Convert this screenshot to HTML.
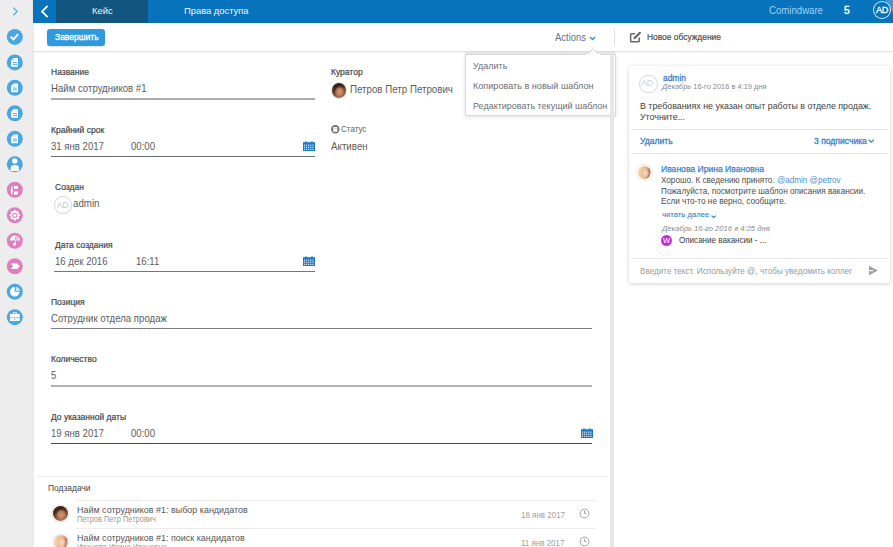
<!DOCTYPE html>
<html><head><meta charset="utf-8"><style>
html,body{margin:0;padding:0;width:893px;height:547px;overflow:hidden;background:#fff;}
body{position:relative;font-family:"Liberation Sans",sans-serif;}
.t{position:absolute;white-space:nowrap;line-height:1;z-index:3;transform-origin:0 0;}
.r{position:absolute;}
</style></head><body>
<div class="r" style="left:0px;top:0px;width:33px;height:547px;background:#ededed;box-shadow:1px 0 2px rgba(0,0,0,0.07);z-index:1"></div>
<div class="r" style="left:31.5px;top:0px;width:1.5px;height:547px;background:#e6e6e6;z-index:1"></div>
<svg class="r" style="left:0;top:0;z-index:3" width="33" height="547" viewBox="0 0 33 547"><path d="M13.3 7.6 L17.2 11.5 L13.3 15.4" fill="none" stroke="#4aa6e2" stroke-width="1.1"/></svg>
<svg class="r" style="left:0;top:0;z-index:3" width="33" height="547" viewBox="0 0 33 547"><circle cx="14.8" cy="36.90" r="8" fill="#4aa6e2"/><g transform="translate(14.8,36.90)" fill="#fff" stroke="none"><path d="M-4.2 -0.2 L-1.4 2.5 L3.3 -2.8" fill="none" stroke="#fff" stroke-width="1.9"/></g><circle cx="14.8" cy="62.38" r="8" fill="#4aa6e2"/><g transform="translate(14.8,62.38)" fill="#fff" stroke="none"><path d="M-1.2 -4.4 L3.2 -4.4 L3.2 4.4 L-3.75 4.4 L-3.75 -1.8 Z" fill="#fff"/><path d="M-1.2 -4.4 L-1.2 -1.8 L-3.75 -1.8" fill="none" stroke="#4aa6e2" stroke-width="0.5" opacity="0.5"/><rect x="-1.9" y="-0.25" width="4" height="0.9" fill="#4aa6e2"/><rect x="-1.9" y="1.55" width="4" height="0.9" fill="#4aa6e2"/><rect x="-0.3" y="-3.2" width="2.4" height="0.7" fill="#4aa6e2" opacity="0.35"/></g><circle cx="14.8" cy="87.86" r="8" fill="#4aa6e2"/><g transform="translate(14.8,87.86)" fill="#fff" stroke="none"><path d="M-1.2 -4.4 L3.2 -4.4 L3.2 4.4 L-3.75 4.4 L-3.75 -1.8 Z" fill="#fff"/><path d="M-1.2 -4.4 L-1.2 -1.8 L-3.75 -1.8" fill="none" stroke="#4aa6e2" stroke-width="0.5" opacity="0.5"/><rect x="-1.9" y="-0.25" width="4" height="0.9" fill="#4aa6e2"/><rect x="-1.9" y="1.55" width="4" height="0.9" fill="#4aa6e2"/><rect x="-0.3" y="-3.2" width="2.4" height="0.7" fill="#4aa6e2" opacity="0.35"/></g><circle cx="14.8" cy="113.34" r="8" fill="#4aa6e2"/><g transform="translate(14.8,113.34)" fill="#fff" stroke="none"><path d="M-1.2 -4.4 L3.2 -4.4 L3.2 4.4 L-3.75 4.4 L-3.75 -1.8 Z" fill="#fff"/><path d="M-1.2 -4.4 L-1.2 -1.8 L-3.75 -1.8" fill="none" stroke="#4aa6e2" stroke-width="0.5" opacity="0.5"/><rect x="-1.9" y="-0.25" width="4" height="0.9" fill="#4aa6e2"/><rect x="-1.9" y="1.55" width="4" height="0.9" fill="#4aa6e2"/><rect x="-0.3" y="-3.2" width="2.4" height="0.7" fill="#4aa6e2" opacity="0.35"/></g><circle cx="14.8" cy="138.82" r="8" fill="#4aa6e2"/><g transform="translate(14.8,138.82)" fill="#fff" stroke="none"><path d="M-1.2 -4.4 L3.2 -4.4 L3.2 4.4 L-3.75 4.4 L-3.75 -1.8 Z" fill="#fff"/><path d="M-1.2 -4.4 L-1.2 -1.8 L-3.75 -1.8" fill="none" stroke="#4aa6e2" stroke-width="0.5" opacity="0.5"/><rect x="-1.9" y="-0.25" width="4" height="0.9" fill="#4aa6e2"/><rect x="-1.9" y="1.55" width="4" height="0.9" fill="#4aa6e2"/><rect x="-0.3" y="-3.2" width="2.4" height="0.7" fill="#4aa6e2" opacity="0.35"/></g><circle cx="14.8" cy="164.30" r="8" fill="#4aa6e2"/><g transform="translate(14.8,164.30)" fill="#fff" stroke="none"><circle cx="0" cy="-3.4" r="2.7"/><path d="M-4.2 6.6 L-4.2 3.6 Q-4.2 0.7 0 0.7 Q4.2 0.7 4.2 3.6 L4.2 6.6 Z"/></g><circle cx="14.8" cy="189.78" r="8" fill="#df7fbf"/><g transform="translate(14.8,189.78)" fill="#fff" stroke="none"><rect x="-0.8" y="-3.8" width="4" height="2.8"/><rect x="-0.8" y="1.7" width="4" height="3.1"/><path d="M-2.9 -3.6 L-2.9 4.6" stroke="#fff" stroke-width="1.3"/><path d="M-4.6 0.5 L-2.4 -1.2 L-2.4 2.2 Z"/></g><circle cx="14.8" cy="215.26" r="8" fill="#df7fbf"/><g transform="translate(14.8,215.26)" fill="#fff" stroke="none"><path d="M0.00 -5.70 L1.57 -3.79 L4.03 -4.03 L3.79 -1.57 L5.70 0.00 L3.79 1.57 L4.03 4.03 L1.57 3.79 L0.00 5.70 L-1.57 3.79 L-4.03 4.03 L-3.79 1.57 L-5.70 0.00 L-3.79 -1.57 L-4.03 -4.03 L-1.57 -3.79 Z"/><circle cx="0" cy="0" r="2.6" fill="#df7fbf"/><circle cx="0" cy="0" r="1.5" fill="#fff"/></g><circle cx="14.8" cy="240.74" r="8" fill="#df7fbf"/><g transform="translate(14.8,240.74)" fill="#fff" stroke="none"><path d="M-4.8 -0.2 A5 5 0 0 1 5.2 -0.2 Z"/><path d="M2.6 -5.4 L-0.3 3.6" stroke="#df7fbf" stroke-width="2.6"/><path d="M2.5 -5 L-0.3 3.6" stroke="#fff" stroke-width="0.9"/><circle cx="-0.3" cy="3.6" r="1.5"/></g><circle cx="14.8" cy="266.22" r="8" fill="#df7fbf"/><g transform="translate(14.8,266.22)" fill="#fff" stroke="none"><path d="M-3.9 -2.6 L2.5 -2.6 L4.9 0.2 L2.5 2.9 L-3.9 2.9 L-1.8 0.2 Z"/></g><circle cx="14.8" cy="291.70" r="8" fill="#4aa6e2"/><g transform="translate(14.8,291.70)" fill="#fff" stroke="none"><path d="M-0.1 -4.6 A4.75 4.75 0 1 0 4.65 0.15 L-0.1 0.15 Z"/><path d="M1 -5 L1 -0.8 L5.3 -0.8 A4.75 4.75 0 0 0 1 -5 Z" fill="#c5e3f7"/></g><circle cx="14.8" cy="317.18" r="8" fill="#4aa6e2"/><g transform="translate(14.8,317.18)" fill="#fff" stroke="none"><rect x="-4.9" y="-3.2" width="9.8" height="7" rx="0.6"/><rect x="-1.6" y="-4.4" width="3.2" height="1.8" fill="none" stroke="#fff" stroke-width="0.9"/><rect x="-4.9" y="0.3" width="9.8" height="0.6" fill="#4aa6e2"/><circle cx="-0.3" cy="2.1" r="0.6" fill="#4aa6e2"/></g></svg>
<div class="r" style="left:33px;top:0px;width:860px;height:23px;background:#0673bc;z-index:2"></div>
<div class="r" style="left:56px;top:0px;width:92px;height:23px;background:#125680;z-index:2"></div>
<svg class="r" style="left:33px;top:0;z-index:3" width="23" height="23"><path d="M14.6 5.8 L9 11.5 L14.6 17.2" fill="none" stroke="#fff" stroke-width="1.8"/></svg>
<div class="t" style="left:91.50px;top:6.45px;font-size:9.87px;color:#eef3f8;font-weight:normal;font-style:normal;transform:scaleX(0.9524);">Кейс</div>
<div class="t" style="left:183.70px;top:5.88px;font-size:9.83px;color:#f2f7fb;font-weight:normal;font-style:normal;transform:scaleX(0.9524);">Права доступа</div>
<div class="t" style="left:769.10px;top:5.85px;font-size:10.10px;color:#a3d0f2;font-weight:normal;font-style:normal;transform:scaleX(0.9524);">Comindware</div>
<div class="t" style="left:843.90px;top:5.33px;font-size:10.71px;color:#ffffff;font-weight:normal;font-style:normal;transform:scaleX(0.9524);-webkit-text-stroke:0.45px #fff">5</div>
<div class="r" style="left:885px;top:0;z-index:3;width:8px;height:13px;background:#3a9ae0;clip-path:polygon(0 0,100% 0,100% 100%)"></div>
<div class="r" style="left:873px;top:1.1px;z-index:3;width:16px;height:16px;border:1px solid rgba(255,255,255,0.85);border-radius:50%;background:#0673bc"></div>
<div class="t" style="left:876.20px;top:4.72px;font-size:9.66px;color:#fff;font-weight:normal;font-style:normal;transform:scaleX(0.9524);letter-spacing:-0.5px;-webkit-text-stroke:0.3px #fff">AD</div>
<div class="r" style="left:33px;top:23px;width:860px;height:28px;background:#ffffff;"></div>
<div class="r" style="left:33px;top:51px;width:860px;height:1px;background:#e2e4e6;box-shadow:0 1px 1px rgba(0,0,0,0.04)"></div>
<div class="r" style="left:47.3px;top:28.9px;width:58px;height:17.3px;background:#2f99df;border-radius:3px;box-shadow:0 1px 2px rgba(0,0,0,0.14)"></div>
<div class="t" style="left:54.60px;top:33.04px;font-size:8.93px;color:#ffffff;font-weight:normal;font-style:normal;transform:scaleX(0.9524);-webkit-text-stroke:0.3px #fff">Завершить</div>
<div class="t" style="left:554.80px;top:33.05px;font-size:10.45px;color:#677180;font-weight:normal;font-style:normal;transform:scaleX(0.9091);">Actions</div>
<svg class="r" style="left:589.3px;top:35.8px" width="8" height="5"><path d="M0.9 0.9 L3.6 3.5 L6.3 0.9" fill="none" stroke="#2f8ad4" stroke-width="1.3"/></svg>
<div class="r" style="left:614px;top:28px;width:1px;height:18px;background:#e2e2e2;"></div>
<div class="r" style="left:610.2px;top:52px;width:4px;height:495px;background:#e6e6e6;z-index:2"></div>
<div class="t" style="left:51.00px;top:68.34px;font-size:8.93px;color:#45484d;font-weight:normal;font-style:normal;transform:scaleX(0.9524);-webkit-text-stroke:0.22px #45484d">Название</div>
<div class="t" style="left:51.00px;top:83.95px;font-size:10.10px;color:#5c5c5c;font-weight:normal;font-style:normal;transform:scaleX(0.9524);">Найм сотрудников #1</div>
<div class="r" style="left:51px;top:98px;width:264px;height:2px;background:#a9acb0;"></div>
<div class="t" style="left:51.00px;top:125.64px;font-size:8.93px;color:#45484d;font-weight:normal;font-style:normal;transform:scaleX(0.9524);-webkit-text-stroke:0.22px #45484d">Крайний срок</div>
<div class="t" style="left:51.00px;top:142.37px;font-size:10.08px;color:#5c5c5c;font-weight:normal;font-style:normal;transform:scaleX(0.9524);">31 янв 2017</div>
<div class="t" style="left:131.40px;top:142.37px;font-size:10.08px;color:#5c5c5c;font-weight:normal;font-style:normal;transform:scaleX(0.9524);">00:00</div>
<div class="r" style="left:51px;top:155.6px;width:264px;height:1.4px;background:#6a6d71;"></div>
<svg class="r" style="left:303px;top:141px" width="12" height="10" viewBox="0 0 12 10"><path d="M0 1.2 L12 1.2 L12 10 L0 10 Z" fill="#1a78c6"/><rect x="2.5" y="0" width="1" height="2" fill="#1a78c6"/><rect x="8.5" y="0" width="1" height="2" fill="#1a78c6"/><rect x="1.0" y="3.6" width="1.1" height="1.1" fill="#fff"/><rect x="1.0" y="5.7" width="1.1" height="1.1" fill="#fff"/><rect x="1.0" y="7.8" width="1.1" height="1.1" fill="#fff"/><rect x="3.1" y="3.6" width="1.1" height="1.1" fill="#fff"/><rect x="3.1" y="5.7" width="1.1" height="1.1" fill="#fff"/><rect x="3.1" y="7.8" width="1.1" height="1.1" fill="#fff"/><rect x="5.2" y="3.6" width="1.1" height="1.1" fill="#fff"/><rect x="5.2" y="5.7" width="1.1" height="1.1" fill="#fff"/><rect x="5.2" y="7.8" width="1.1" height="1.1" fill="#fff"/><rect x="7.3" y="3.6" width="1.1" height="1.1" fill="#fff"/><rect x="7.3" y="5.7" width="1.1" height="1.1" fill="#fff"/><rect x="7.3" y="7.8" width="1.1" height="1.1" fill="#fff"/><rect x="9.4" y="3.6" width="1.1" height="1.1" fill="#fff"/><rect x="9.4" y="5.7" width="1.1" height="1.1" fill="#fff"/><rect x="9.4" y="7.8" width="1.1" height="1.1" fill="#fff"/></svg>
<div class="t" style="left:331.00px;top:68.44px;font-size:8.93px;color:#45484d;font-weight:normal;font-style:normal;transform:scaleX(0.9524);-webkit-text-stroke:0.22px #45484d">Куратор</div>
<div class="r" style="left:331.6px;top:83px;width:14.7px;height:14.7px;border-radius:50%;background:radial-gradient(ellipse 36% 40% at 55% 60%, #d39a7c 0, #b97a5c 60%, rgba(150,100,70,0) 100%), linear-gradient(160deg, #20140e 0, #4a2c1c 35%, #7e4e34 60%, #8a6a48 85%, #5a4a30 100%);box-shadow:0 0 1px 1px rgba(0,0,0,0.10)"></div>
<div class="t" style="left:349.50px;top:84.74px;font-size:10.23px;color:#5c5c5c;font-weight:normal;font-style:normal;transform:scaleX(0.9524);">Петров Петр Петрович</div>
<svg class="r" style="left:330.7px;top:125.2px" width="9" height="9" viewBox="0 0 9 9"><circle cx="4.3" cy="4.3" r="4.2" fill="#6c7178"/><rect x="2.2" y="2" width="4.2" height="4.7" rx="0.5" fill="#fff"/><rect x="2.6" y="2.9" width="3.4" height="0.6" fill="#6c7178" opacity="0.6"/></svg>
<div class="t" style="left:341.00px;top:125.46px;font-size:8.43px;color:#5a6270;font-weight:normal;font-style:normal;transform:scaleX(0.9524);">Статус</div>
<div class="t" style="left:331.00px;top:141.93px;font-size:10.25px;color:#5c5c5c;font-weight:normal;font-style:normal;transform:scaleX(0.9524);">Активен</div>
<div class="t" style="left:54.60px;top:182.84px;font-size:8.93px;color:#45484d;font-weight:normal;font-style:normal;transform:scaleX(0.9524);-webkit-text-stroke:0.22px #45484d">Создан</div>
<div class="r" style="left:54px;top:196.2px;width:15.6px;height:15.6px;border:1px solid #d5d5d5;border-radius:50%"></div>
<div class="t" style="left:56.80px;top:201.03px;font-size:8.82px;color:#c4c4c4;font-weight:normal;font-style:normal;transform:scaleX(0.9524);">AD</div>
<div class="t" style="left:73.20px;top:199.16px;font-size:10.21px;color:#5a5a5a;font-weight:normal;font-style:normal;transform:scaleX(0.9524);">admin</div>
<div class="t" style="left:54.60px;top:240.64px;font-size:8.93px;color:#45484d;font-weight:normal;font-style:normal;transform:scaleX(0.9524);-webkit-text-stroke:0.22px #45484d">Дата создания</div>
<div class="t" style="left:54.60px;top:257.37px;font-size:10.08px;color:#5c5c5c;font-weight:normal;font-style:normal;transform:scaleX(0.9524);">16 дек 2016</div>
<div class="t" style="left:135.60px;top:257.37px;font-size:10.08px;color:#5c5c5c;font-weight:normal;font-style:normal;transform:scaleX(0.9524);">16:11</div>
<svg class="r" style="left:303px;top:256px" width="12" height="10" viewBox="0 0 12 10"><path d="M0 1.2 L12 1.2 L12 10 L0 10 Z" fill="#1a78c6"/><rect x="2.5" y="0" width="1" height="2" fill="#1a78c6"/><rect x="8.5" y="0" width="1" height="2" fill="#1a78c6"/><rect x="1.0" y="3.6" width="1.1" height="1.1" fill="#fff"/><rect x="1.0" y="5.7" width="1.1" height="1.1" fill="#fff"/><rect x="1.0" y="7.8" width="1.1" height="1.1" fill="#fff"/><rect x="3.1" y="3.6" width="1.1" height="1.1" fill="#fff"/><rect x="3.1" y="5.7" width="1.1" height="1.1" fill="#fff"/><rect x="3.1" y="7.8" width="1.1" height="1.1" fill="#fff"/><rect x="5.2" y="3.6" width="1.1" height="1.1" fill="#fff"/><rect x="5.2" y="5.7" width="1.1" height="1.1" fill="#fff"/><rect x="5.2" y="7.8" width="1.1" height="1.1" fill="#fff"/><rect x="7.3" y="3.6" width="1.1" height="1.1" fill="#fff"/><rect x="7.3" y="5.7" width="1.1" height="1.1" fill="#fff"/><rect x="7.3" y="7.8" width="1.1" height="1.1" fill="#fff"/><rect x="9.4" y="3.6" width="1.1" height="1.1" fill="#fff"/><rect x="9.4" y="5.7" width="1.1" height="1.1" fill="#fff"/><rect x="9.4" y="7.8" width="1.1" height="1.1" fill="#fff"/></svg>
<div class="r" style="left:54px;top:270.7px;width:261px;height:1.3px;background:#74777b;"></div>
<div class="t" style="left:51.00px;top:297.84px;font-size:8.93px;color:#45484d;font-weight:normal;font-style:normal;transform:scaleX(0.9524);-webkit-text-stroke:0.22px #45484d">Позиция</div>
<div class="t" style="left:51.00px;top:313.95px;font-size:10.10px;color:#5c5c5c;font-weight:normal;font-style:normal;transform:scaleX(0.9524);">Сотрудник отдела продаж</div>
<div class="r" style="left:51px;top:327.7px;width:541px;height:1.5px;background:#7a7d82;"></div>
<div class="t" style="left:51.00px;top:355.04px;font-size:8.93px;color:#45484d;font-weight:normal;font-style:normal;transform:scaleX(0.9524);-webkit-text-stroke:0.22px #45484d">Количество</div>
<div class="t" style="left:51.00px;top:371.45px;font-size:10.10px;color:#5c5c5c;font-weight:normal;font-style:normal;transform:scaleX(0.9524);">5</div>
<div class="r" style="left:51px;top:385px;width:541px;height:1.8px;background:#b0b2b5;"></div>
<div class="t" style="left:51.00px;top:412.94px;font-size:8.93px;color:#45484d;font-weight:normal;font-style:normal;transform:scaleX(0.9524);-webkit-text-stroke:0.22px #45484d">До указанной даты</div>
<div class="t" style="left:51.00px;top:428.77px;font-size:10.08px;color:#5c5c5c;font-weight:normal;font-style:normal;transform:scaleX(0.9524);">19 янв 2017</div>
<div class="t" style="left:131.40px;top:428.77px;font-size:10.08px;color:#5c5c5c;font-weight:normal;font-style:normal;transform:scaleX(0.9524);">00:00</div>
<svg class="r" style="left:581px;top:428px" width="12" height="10" viewBox="0 0 12 10"><path d="M0 1.2 L12 1.2 L12 10 L0 10 Z" fill="#1a78c6"/><rect x="2.5" y="0" width="1" height="2" fill="#1a78c6"/><rect x="8.5" y="0" width="1" height="2" fill="#1a78c6"/><rect x="1.0" y="3.6" width="1.1" height="1.1" fill="#fff"/><rect x="1.0" y="5.7" width="1.1" height="1.1" fill="#fff"/><rect x="1.0" y="7.8" width="1.1" height="1.1" fill="#fff"/><rect x="3.1" y="3.6" width="1.1" height="1.1" fill="#fff"/><rect x="3.1" y="5.7" width="1.1" height="1.1" fill="#fff"/><rect x="3.1" y="7.8" width="1.1" height="1.1" fill="#fff"/><rect x="5.2" y="3.6" width="1.1" height="1.1" fill="#fff"/><rect x="5.2" y="5.7" width="1.1" height="1.1" fill="#fff"/><rect x="5.2" y="7.8" width="1.1" height="1.1" fill="#fff"/><rect x="7.3" y="3.6" width="1.1" height="1.1" fill="#fff"/><rect x="7.3" y="5.7" width="1.1" height="1.1" fill="#fff"/><rect x="7.3" y="7.8" width="1.1" height="1.1" fill="#fff"/><rect x="9.4" y="3.6" width="1.1" height="1.1" fill="#fff"/><rect x="9.4" y="5.7" width="1.1" height="1.1" fill="#fff"/><rect x="9.4" y="7.8" width="1.1" height="1.1" fill="#fff"/></svg>
<div class="r" style="left:51px;top:443px;width:541px;height:1.3px;background:#46494d;"></div>
<div class="r" style="left:36.6px;top:475.5px;width:570px;height:1px;background:#e8eaec;"></div>
<div class="t" style="left:47.70px;top:484.10px;font-size:8.86px;color:#444;font-weight:normal;font-style:normal;transform:scaleX(0.9524);">Подзадачи</div>
<div class="r" style="left:76px;top:500.2px;width:520px;height:1px;background:#ececec;"></div>
<div class="r" style="left:76px;top:528px;width:520px;height:1px;background:#ececec;"></div>
<div class="r" style="left:53.4px;top:506.4px;width:14.8px;height:14.8px;border-radius:50%;background:radial-gradient(ellipse 36% 40% at 55% 60%, #d39a7c 0, #b97a5c 60%, rgba(150,100,70,0) 100%), linear-gradient(160deg, #20140e 0, #4a2c1c 35%, #7e4e34 60%, #8a6a48 85%, #5a4a30 100%);box-shadow:0 0 0 0.6px #fff, 0 0 1px 1.5px rgba(0,0,0,0.13)"></div>
<div class="t" style="left:76.70px;top:504.73px;font-size:9.42px;color:#555;font-weight:normal;font-style:normal;transform:scaleX(0.9524);">Найм сотрудников #1: выбор кандидатов</div>
<div class="t" style="left:76.70px;top:514.73px;font-size:8.59px;color:#9a9a9a;font-weight:normal;font-style:normal;transform:scaleX(0.8696);">Петров Петр Петрович</div>
<div class="t" style="left:520.90px;top:511.00px;font-size:8.39px;color:#a0a0a0;font-weight:normal;font-style:normal;transform:scaleX(0.9524);">18 янв 2017</div>
<div class="r" style="left:53.6px;top:534.7px;width:14.4px;height:14.4px;border-radius:50%;background:radial-gradient(ellipse 30% 38% at 55% 55%, #f8dccc 0, #f0c4aa 60%, rgba(240,196,170,0) 100%), linear-gradient(100deg, #f2dca8 0, #eec89a 30%, #e8b890 55%, #b87a55 80%, #e9dcd6 100%);box-shadow:0 0 0 0.8px #fff, 0 0 1px 1.6px rgba(0,0,0,0.13)"></div>
<div class="t" style="left:76.70px;top:532.93px;font-size:9.42px;color:#555;font-weight:normal;font-style:normal;transform:scaleX(0.9524);">Найм сотрудников #1: поиск кандидатов</div>
<div class="t" style="left:76.70px;top:543.03px;font-size:8.59px;color:#9a9a9a;font-weight:normal;font-style:normal;transform:scaleX(0.8696);">Иванова Ирина Ивановна</div>
<div class="t" style="left:520.90px;top:538.90px;font-size:8.39px;color:#a0a0a0;font-weight:normal;font-style:normal;transform:scaleX(0.9524);">11 янв 2017</div>
<svg class="r" style="left:579px;top:508.1px" width="11" height="11" viewBox="0 0 11 11"><circle cx="5.5" cy="5.5" r="4.4" fill="none" stroke="#9a9a9a" stroke-width="0.9"/><path d="M5.5 2.7 L5.5 5.4 L7.4 5.4" fill="none" stroke="#9a9a9a" stroke-width="0.9"/></svg>
<svg class="r" style="left:579px;top:535.7px" width="11" height="11" viewBox="0 0 11 11"><circle cx="5.5" cy="5.5" r="4.4" fill="none" stroke="#9a9a9a" stroke-width="0.9"/><path d="M5.5 2.7 L5.5 5.4 L7.4 5.4" fill="none" stroke="#9a9a9a" stroke-width="0.9"/></svg>
<div class="r" style="left:465px;top:51.5px;width:149.5px;height:2.8px;background:#e9eaea;box-shadow:0 0 3px rgba(0,0,0,0.08)"></div>
<div class="r" style="left:465px;top:54.1px;width:148.5px;height:60.2px;background:#fff;border:1px solid #d9d9d9;box-shadow:0 1px 4px rgba(0,0,0,0.13)"></div>
<svg class="r" style="left:586px;top:48px;z-index:1" width="14" height="8" viewBox="0 0 14 8"><path d="M1.9 6.3 L6.8 0.6 L12.2 6.3" fill="#fff" stroke="#d0d0d0" stroke-width="0.9"/><rect x="0" y="6.1" width="14" height="2" fill="#fff"/></svg>
<div class="t" style="left:473.00px;top:61.40px;font-size:9.45px;color:#6e6e6e;font-weight:normal;font-style:normal;transform:scaleX(0.9524);">Удалить</div>
<div class="t" style="left:473.00px;top:81.01px;font-size:9.55px;color:#6e6e6e;font-weight:normal;font-style:normal;transform:scaleX(0.9524);">Копировать в новый шаблон</div>
<div class="t" style="left:473.00px;top:100.70px;font-size:9.45px;color:#6e6e6e;font-weight:normal;font-style:normal;transform:scaleX(0.9524);">Редактировать текущий шаблон</div>
<svg class="r" style="left:629px;top:31px" width="13" height="13" viewBox="0 0 13 13"><path d="M5.9 2.65 L2.4 2.65 Q1.65 2.65 1.65 3.4 L1.65 10 Q1.65 10.75 2.4 10.75 L9.45 10.75 Q10.2 10.75 10.2 10 L10.2 6.5" fill="none" stroke="#666" stroke-width="1.5"/><path d="M10.9 1.8 L5.9 6.8" stroke="#666" stroke-width="2.2" stroke-linecap="round"/><path d="M4.9 6.2 L6.5 7.8 L4.4 8.4 Z" fill="#666"/></svg>
<div class="t" style="left:646.60px;top:33.42px;font-size:8.84px;color:#4a4a4a;font-weight:normal;font-style:normal;transform:scaleX(0.9524);-webkit-text-stroke:0.18px #4a4a4a">Новое обсуждение</div>
<div class="r" style="left:629px;top:65.5px;width:261px;height:217.2px;background:#fff;border-radius:2px;box-shadow:0 1px 4px rgba(0,0,0,0.18)"></div>
<div class="r" style="left:639.3px;top:74.8px;width:16.4px;height:16.4px;border:1px solid #d8d8d8;border-radius:50%"></div>
<div class="t" style="left:641.30px;top:79.38px;font-size:9.24px;color:#cfcfcf;font-weight:normal;font-style:normal;transform:scaleX(0.9524);">AD</div>
<div class="t" style="left:663.20px;top:74.30px;font-size:8.86px;color:#3b7dc4;font-weight:normal;font-style:normal;transform:scaleX(0.9524);-webkit-text-stroke:0.3px #3b7dc4">admin</div>
<div class="t" style="left:662.40px;top:83.18px;font-size:7.82px;color:#8a8a8a;font-weight:normal;font-style:normal;transform:scaleX(0.9524);"><i>Декабрь</i> 16-го 2016 в 4:19 дня</div>
<div class="t" style="left:639.70px;top:102.32px;font-size:9.31px;color:#404040;font-weight:normal;font-style:normal;transform:scaleX(0.9524);">В требованиях не указан опыт работы в отделе продаж.</div>
<div class="t" style="left:639.70px;top:113.32px;font-size:9.31px;color:#404040;font-weight:normal;font-style:normal;transform:scaleX(0.9524);">Уточните...</div>
<div class="r" style="left:630.5px;top:129.4px;width:257px;height:1px;background:#e8e8e8;"></div>
<div class="t" style="left:639.90px;top:137.19px;font-size:8.99px;color:#3580c8;font-weight:normal;font-style:normal;transform:scaleX(0.9524);-webkit-text-stroke:0.3px #3580c8">Удалить</div>
<div class="t" style="left:814.10px;top:137.19px;font-size:8.99px;color:#3580c8;font-weight:normal;font-style:normal;transform:scaleX(0.9524);-webkit-text-stroke:0.3px #3580c8">3 подписчика</div>
<svg class="r" style="left:867.8px;top:139.3px" width="7" height="5"><path d="M0.6 0.6 L3.2 3.2 L5.8 0.6" fill="none" stroke="#3580c8" stroke-width="1.3"/></svg>
<div class="r" style="left:630.5px;top:153px;width:257px;height:1px;background:#e8e8e8;"></div>
<div class="r" style="left:638.1px;top:166px;width:13.4px;height:13.4px;border-radius:50%;background:radial-gradient(ellipse 30% 38% at 55% 55%, #f8dccc 0, #f0c4aa 60%, rgba(240,196,170,0) 100%), linear-gradient(100deg, #f2dca8 0, #eec89a 30%, #e8b890 55%, #b87a55 80%, #e9dcd6 100%);box-shadow:0 0 0 1.3px #fff, 0 0 1px 2px rgba(0,0,0,0.10)"></div>
<div class="t" style="left:661.00px;top:165.38px;font-size:9.00px;color:#3a82c8;font-weight:normal;font-style:normal;transform:scaleX(0.9524);-webkit-text-stroke:0.25px #3a82c8">Иванова Ирина Ивановна</div>
<div class="t" style="left:661.00px;top:176.26px;font-size:8.55px;color:#4c4c4c;font-weight:normal;font-style:normal;transform:scaleX(0.9524);">Хорошо. К сведению принято. <span style="color:#4a8fd0">@admin @petrov</span></div>
<div class="t" style="left:661.00px;top:186.60px;font-size:8.62px;color:#4c4c4c;font-weight:normal;font-style:normal;transform:scaleX(0.9524);">Пожалуйста, посмотрите шаблон описания вакансии.</div>
<div class="t" style="left:661.00px;top:197.20px;font-size:8.62px;color:#4c4c4c;font-weight:normal;font-style:normal;transform:scaleX(0.9524);">Если что-то не верно, сообщите.</div>
<div class="t" style="left:661.50px;top:211.48px;font-size:8.05px;color:#3b7dc4;font-weight:normal;font-style:normal;transform:scaleX(0.9524);-webkit-text-stroke:0.1px #3b7dc4">читать далее</div>
<svg class="r" style="left:711.4px;top:214.6px" width="6" height="4"><path d="M0.6 0.6 L2.7 2.6 L4.8 0.6" fill="none" stroke="#3b7dc4" stroke-width="1.2"/></svg>
<div class="t" style="left:661.50px;top:224.53px;font-size:8.00px;color:#8a8a8a;font-weight:normal;font-style:italic;transform:scaleX(0.9524);">Декабрь 16-го 2016 в 4:25 дня</div>
<div class="r" style="left:661px;top:235px;width:11px;height:11px;border-radius:50%;background:#c030d8"></div>
<div class="t" style="left:663.00px;top:236.84px;font-size:7.98px;color:#fff;font-weight:normal;font-style:normal;transform:scaleX(0.9524);">W</div>
<div class="t" style="left:679.40px;top:236.14px;font-size:8.46px;color:#3a3a3a;font-weight:normal;font-style:normal;transform:scaleX(0.9524);">Описание вакансии - ...</div>
<div class="r" style="left:630.5px;top:258px;width:257px;height:1px;background:#e8e8e8;"></div>
<div class="t" style="left:639.90px;top:266.97px;font-size:8.54px;color:#9a9a9a;font-weight:normal;font-style:normal;transform:scaleX(0.9524);">Введите текст. Используйте @, чтобы уведомить коллег</div>
<svg class="r" style="left:869.2px;top:266.2px" width="10" height="10" viewBox="0 0 10 10"><path d="M0 0 L8.9 4.5 L0 9.2 Z" fill="#9c9c9c"/><path d="M0 4.6 L4.2 4.6" stroke="#fff" stroke-width="1.3"/></svg>
</body></html>
